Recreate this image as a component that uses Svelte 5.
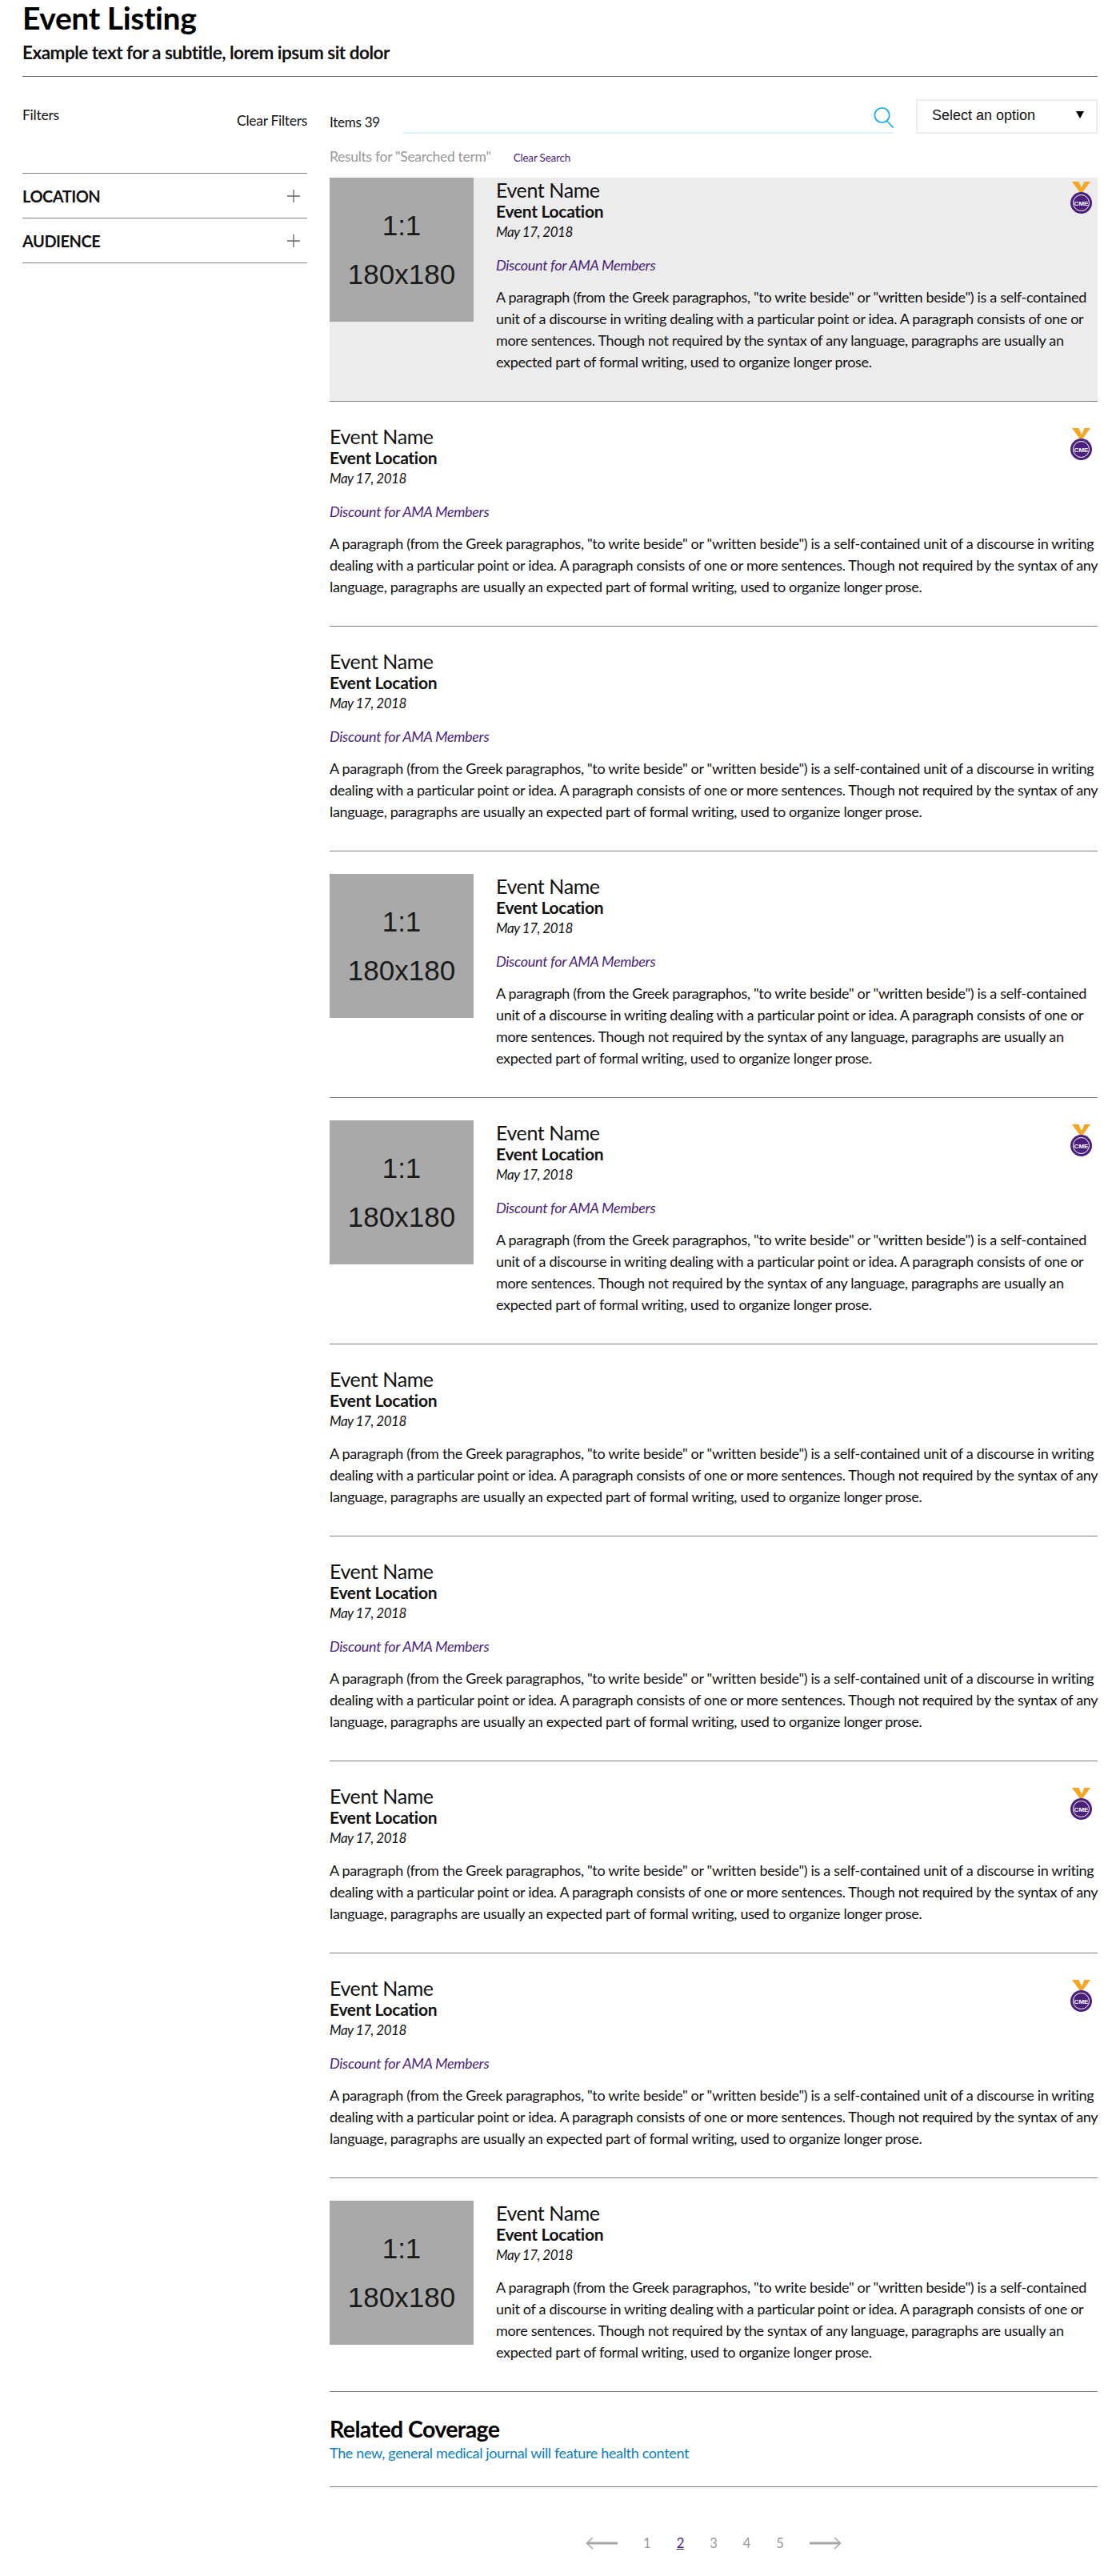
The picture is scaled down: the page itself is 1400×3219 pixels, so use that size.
<script>
  const text =
    'A paragraph (from the Greek paragraphos, "to write beside" or "written beside") is a self-contained unit of a discourse in writing dealing with a particular point or idea. A paragraph consists of one or more sentences. Though not required by the syntax of any language, paragraphs are usually an expected part of formal writing, used to organize longer prose.'

  const events = [
    { img: true, cme: true, discount: true, highlight: true },
    { cme: true, discount: true },
    { discount: true },
    { img: true, discount: true },
    { img: true, cme: true, discount: true },
    {},
    { discount: true },
    { cme: true },
    { cme: true, discount: true },
    { img: true }
  ]

  const filters = ['LOCATION', 'AUDIENCE']
  const pages = [1, 2, 3, 4, 5]
</script>

<div class="page">
  <header class="head">
    <h1>Event Listing</h1>
    <p class="subtitle">Example text for a subtitle, lorem ipsum sit dolor</p>
  </header>

  <div class="layout">
    <aside class="sidebar">
      <div class="filter-top">
        <span class="filters-label">Filters</span>
        <span class="clear-filters">Clear Filters</span>
      </div>
      {#each filters as f}
        <div class="filter-row">
          <span>{f}</span>
          <svg width="16" height="16" viewBox="0 0 16 16"><path d="M8 0v16M0 8h16" stroke="#666" stroke-width="1.3" fill="none" /></svg>
        </div>
      {/each}
    </aside>

    <main class="main">
      <div class="toolbar">
        <span class="count">Items 39</span>
        <div class="search">
          <svg width="25" height="27" viewBox="0 0 25 27">
            <circle cx="10.5" cy="11" r="9.2" stroke="#1caee8" stroke-width="1.8" fill="none" />
            <path d="M16.5 18l8 8.5" stroke="#1caee8" stroke-width="1.8" fill="none" />
          </svg>
        </div>
        <div class="select">
          <span>Select an option</span>
          <i class="caret"></i>
        </div>
      </div>

      <div class="results">
        <span class="results-text">Results for "Searched term"</span>
        <span class="clear-search">Clear Search</span>
      </div>

      {#each events as ev}
        <article class="event" class:highlight={ev.highlight} class:has-img={ev.img}>
          {#if ev.img}
            <div class="thumb"><span>1:1</span><span>180x180</span></div>
          {/if}
          <div class="body">
            <div class="name">Event Name</div>
            <div class="location">Event Location</div>
            <div class="date">May 17, 2018</div>
            {#if ev.discount}
              <div class="discount">Discount for AMA Members</div>
            {/if}
            <p>{text}</p>
          </div>
          {#if ev.cme}
            <svg class="medal" width="27" height="40" viewBox="0 0 27 40">
              <path d="M2 0h8.5l3.5 8 3.500-8H25l-9.500 13h-4z" fill="#f5a623" />
              <circle cx="13.500" cy="26.500" r="13.500" fill="#4b1f7c" />
              <circle cx="13.500" cy="26.500" r="10" fill="none" stroke="#fff" stroke-width="1" />
              <text x="13.500" y="29.500" text-anchor="middle" class="medal-text">CME</text>
            </svg>
          {/if}
        </article>
      {/each}

      <section class="related">
        <h2>Related Coverage</h2>
        <span class="related-link">The new, general medical journal will feature health content</span>
      </section>

      <nav class="pager">
        <svg width="40" height="16" viewBox="0 0 40 16"><path d="M9 1L1.500 8 9 15" stroke="#a6a6a6" stroke-width="1.500" fill="none" /><path d="M2 8h38" stroke="#a6a6a6" stroke-width="3" /></svg>
        <div class="nums">
          {#each pages as p}
            <span class:current={p === 2}>{p}</span>
          {/each}
        </div>
        <svg width="40" height="16" viewBox="0 0 40 16"><path d="M31 1l7.500 7L31 15" stroke="#a6a6a6" stroke-width="1.500" fill="none" /><path d="M0 8h38" stroke="#a6a6a6" stroke-width="3" /></svg>
      </nav>
    </main>
  </div>
</div>

<style>
  :global(body) {
    margin: 0;
    background: #fff;
  }

  .page {
    padding: 0 28px;
    height: 3219px;
    box-sizing: border-box;
    font-family: Lato, "Liberation Sans", sans-serif;
    color: #111;
    overflow: hidden;
  }

  .head {
    border-bottom: 1px solid #666;
    height: 96px;
    box-sizing: border-box;
  }

  h1 {
    margin: 0;
    padding-top: 1px;
    font-size: 39px;
    line-height: 42px;
    font-weight: 700;
    letter-spacing: -0.4px;
    color: #000;
  }

  .subtitle {
    margin: 9px 0 0;
    font-size: 22.500px;
    line-height: 28px;
    font-weight: 700;
    letter-spacing: -0.5px;
    color: #111;
  }

  .layout {
    display: grid;
    grid-template-columns: 356px 960px;
    column-gap: 28px;
  }

  .filter-top {
    display: flex;
    justify-content: space-between;
    height: 121px;
    border-bottom: 1px solid #808080;
    font-size: 17.500px;
    letter-spacing: -0.25px;
    box-sizing: border-box;
  }

  .filters-label {
    margin-top: 37px;
    line-height: 22px;
  }

  .clear-filters {
    margin-top: 44px;
    line-height: 22px;
    letter-spacing: -0.3px;
  }

  .filter-row {
    display: flex;
    justify-content: space-between;
    align-items: center;
    height: 56px;
    box-sizing: border-box;
    border-bottom: 1px solid #808080;
    padding-right: 9px;
    font-size: 20px;
    font-weight: 700;
    letter-spacing: -0.5px;
  }

  .toolbar {
    display: flex;
    align-items: flex-end;
    height: 71px;
    box-sizing: border-box;
  }

  .count {
    width: 92px;
    font-size: 17px;
    letter-spacing: -0.25px;
    line-height: 22px;
    margin-bottom: 3px;
  }

  .search {
    width: 613px;
    height: 34px;
    display: flex;
    justify-content: flex-end;
    align-items: flex-start;
    box-sizing: border-box;
    border-bottom: 2px solid #dcf3fc;
    margin-right: 28px;
  }

  .select {
    width: 227px;
    height: 43px;
    box-sizing: border-box;
    border: 2px solid #eee;
    display: flex;
    align-items: center;
    justify-content: space-between;
    padding: 0 15px 2px 18px;
    font-family: "Liberation Sans", Arial, sans-serif;
    font-size: 18px;
    color: #111;
  }

  .caret {
    display: block;
    width: 0;
    height: 0;
    border-left: 5px solid transparent;
    border-right: 5px solid transparent;
    border-top: 9px solid #000;
    margin-bottom: 3px;
  }

  .results {
    display: flex;
    align-items: baseline;
    gap: 28px;
    height: 55px;
    padding-top: 18px;
    box-sizing: border-box;
  }

  .results-text {
    font-size: 17.500px;
    letter-spacing: -0.3px;
    color: #999;
  }

  .clear-search {
    font-size: 13.500px;
    letter-spacing: -0.2px;
    color: #4b1f7c;
  }

  .event {
    position: relative;
    padding: 28px 0 35px;
    border-bottom: 1px solid #808080;
  }

  .event.highlight {
    padding-top: 0;
    background: #ececec;
  }

  .event.has-img {
    display: flex;
    gap: 28px;
  }

  .thumb {
    flex: 0 0 180px;
    height: 180px;
    background: #a9a9a9;
    display: flex;
    flex-direction: column;
    align-items: center;
    justify-content: center;
    font-family: "Liberation Sans", Arial, sans-serif;
    font-size: 35px;
    line-height: 61px;
    color: #1a1a1a;
  }

  .name {
    font-size: 25px;
    line-height: 30px;
    letter-spacing: -0.4px;
    color: #111;
  }

  .location {
    font-size: 21px;
    line-height: 24px;
    font-weight: 700;
    letter-spacing: -0.3px;
  }

  .date {
    font-size: 17px;
    line-height: 28px;
    font-style: italic;
    letter-spacing: -0.5px;
  }

  .discount {
    margin-top: 14px;
    font-size: 18px;
    line-height: 27px;
    font-style: italic;
    letter-spacing: -0.3px;
    color: #4b1f7c;
  }

  .event p {
    margin: 13px 0 0;
    font-size: 18px;
    line-height: 27px;
    letter-spacing: -0.32px;
    color: #111;
  }

  .medal {
    position: absolute;
    top: 33px;
    right: 7px;
  }

  .highlight .medal {
    top: 5px;
  }

  .medal-text {
    font-family: "Liberation Sans", sans-serif;
    font-size: 8px;
    font-weight: 700;
    fill: #fff;
  }

  .related {
    height: 119px;
    box-sizing: border-box;
    padding-top: 28px;
    border-bottom: 1px solid #808080;
  }

  h2 {
    margin: 0;
    font-size: 28.500px;
    line-height: 36px;
    font-weight: 700;
    letter-spacing: -0.6px;
    color: #000;
  }

  .related-link {
    display: block;
    font-size: 18px;
    line-height: 24px;
    letter-spacing: -0.35px;
    color: #0a7fc2;
  }

  .pager {
    display: flex;
    justify-content: center;
    align-items: center;
    gap: 32px;
    margin-top: 60px;
  }

  .nums {
    display: flex;
    gap: 32px;
    font-size: 16.500px;
    color: #999;
  }

  .nums .current {
    color: #4b1f7c;
    text-decoration: underline;
  }
</style>
